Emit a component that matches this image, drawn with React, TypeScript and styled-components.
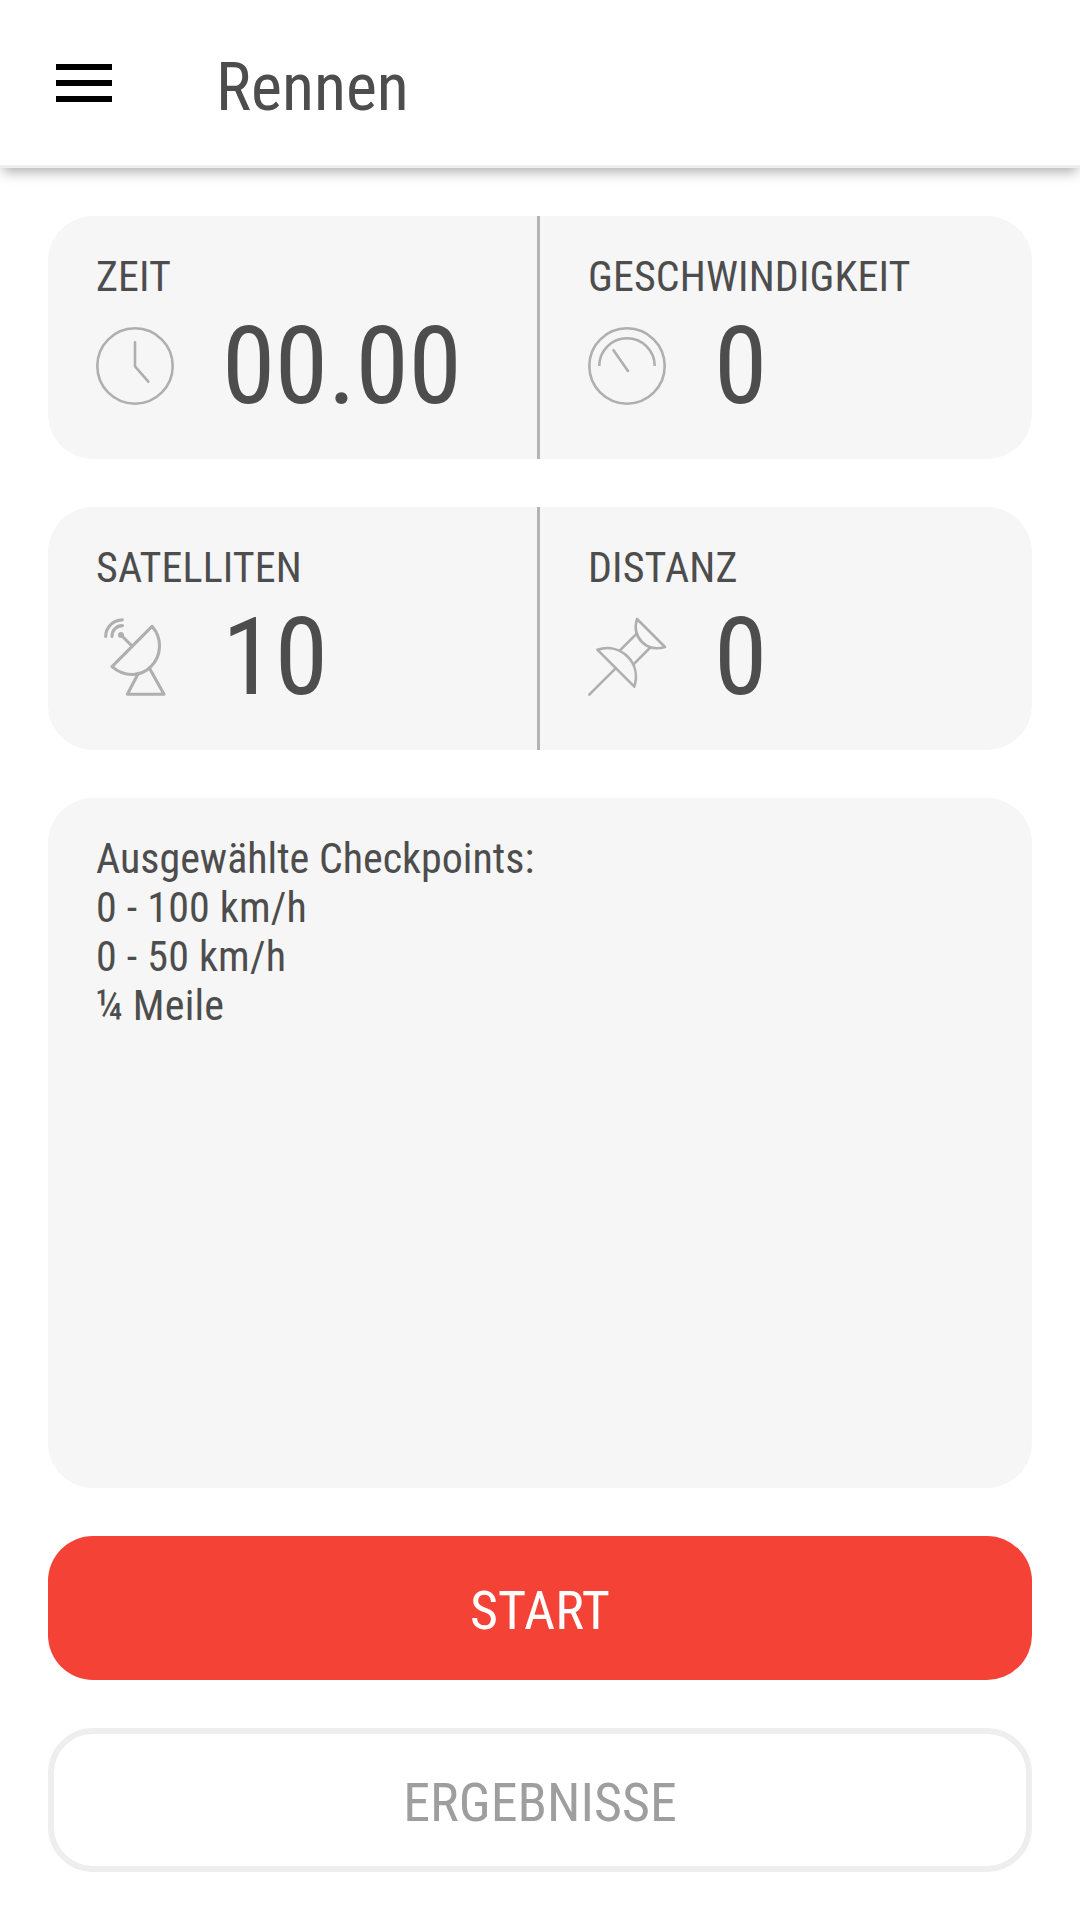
import React from "react";
import styled, { createGlobalStyle } from "styled-components";

const GlobalStyle = createGlobalStyle`
  * { box-sizing: border-box; }
  body {
    margin: 0;
    background: #fff;
    color: #4d4d4d;
    font-family: "Roboto Condensed", Roboto, sans-serif;
    font-stretch: 75%;
  }
`;

const Screen = styled.div`
  display: flex;
  flex-direction: column;
  width: 1080px;
  height: 1920px;
`;

const Header = styled.header`
  display: flex;
  align-items: flex-start;
  height: 168px;
  padding: 0 56px;
  background: #fff;
  border-bottom: 3px solid #eee;
  box-shadow: 0 7px 12px -3px rgba(0, 0, 0, 0.32);
`;

const MenuButton = styled.button`
  display: flex;
  flex-direction: column;
  gap: 10px;
  width: 56px;
  margin: 64px 104px 0 0;
  padding: 0;
  border: 0;
  background: none;
`;

const MenuBar = styled.span`
  height: 6px;
  background: #000;
`;

const Title = styled.h1`
  margin: 49px 0 0;
  font-size: 66px;
  font-weight: 400;
  line-height: 77px;
`;

const Content = styled.main`
  flex: 1;
  display: flex;
  flex-direction: column;
  gap: 48px;
  padding: 48px;
`;

const Card = styled.section`
  display: flex;
  flex-shrink: 0;
  height: 243px;
  overflow: hidden;
  border-radius: 45px;
  background: #f6f6f6;
`;

const Metric = styled.div<{ $divided?: boolean }>`
  width: 492px;
  padding: 36px 0 0 48px;
  border-right: ${(p) => (p.$divided ? "3px solid #b3b3b3" : "0")};
`;

const Label = styled.div`
  font-size: 42px;
  line-height: 49px;
  letter-spacing: 0.12px;
`;

const Reading = styled.div`
  display: flex;
  align-items: center;
  gap: 48px;
  height: 126px;
  margin-top: 2px;
`;

const Value = styled.span`
  font-size: 108px;
  line-height: 126px;
  letter-spacing: -0.5px;
`;

const Icon = styled.svg<{ $weight?: number }>`
  width: 78px;
  height: 78px;
  overflow: visible;
  fill: none;
  stroke: #afafaf;
  stroke-width: ${(p) => p.$weight ?? 2.6};
  stroke-linecap: round;
  stroke-linejoin: round;
`;

const Checkpoints = styled.section`
  flex: 1;
  padding: 36px 48px;
  border-radius: 45px;
  background: #f6f6f6;
  font-size: 42px;
  line-height: 49px;
`;

const Checkpoint = styled.div`
  letter-spacing: 0.2px;
`;

const Action = styled.button<{ $primary?: boolean }>`
  flex-shrink: 0;
  height: 144px;
  padding: 4px 0 0;
  border: ${(p) => (p.$primary ? "0" : "6px solid #eee")};
  border-radius: 45px;
  background: ${(p) => (p.$primary ? "#f44336" : "#fff")};
  color: ${(p) => (p.$primary ? "#fff" : "#9e9e9e")};
  font: inherit;
  font-stretch: 75%;
  font-size: 54px;
`;

const ClockIcon = () => (
  <Icon viewBox="0 0 78 78">
    <circle cx="39" cy="39" r="37.7" />
    <path d="M39 15.3V39.3L52.3 54.7" />
  </Icon>
);

const GaugeIcon = () => (
  <Icon viewBox="0 0 78 78">
    <circle cx="39" cy="39" r="37.7" />
    <path strokeLinecap="butt" d="M11.3 39a27.7 27.7 0 0 1 55.4 0" />
    <path d="M25.5 23.2L40 44" />
  </Icon>
);

const DishIcon = () => (
  <Icon viewBox="0 0 78 78" $weight={3.1}>
    <path d="M56 8.3L16 48.7C29 60 45.5 58 54.6 48.8C66 38 66.5 20 56 8.3Z" />
    <path d="M25 17L36 28" />
    <circle cx="25" cy="17" r="3" fill="#afafaf" stroke="none" />
    <path d="M26.5 7.6C20.5 7.6 16 12 16 18.4M26.3 1.9C17 2.2 9.7 9.2 9.7 18.4" />
    <path d="M42.3 55.3L31.4 76.2H68L53.3 50" />
  </Icon>
);

const PinIcon = () => (
  <Icon viewBox="0 0 78 78">
    <path d="M1.3 76.7L27.6 50.4" />
    <path d="M9.3 31.7C21 28 32 31 39.5 38.5C47 46 50 57 46.3 68.7Z" />
    <path d="M32 32.3L48.7 15.7M45.5 46.3L62.3 29.5" />
    <path d="M49 1C46.5 9.5 48 18 54 24C60 30 68.5 31.5 77 29Z" />
  </Icon>
);

const rows = [
  [
    { label: "ZEIT", value: "00.00", Glyph: ClockIcon },
    { label: "GESCHWINDIGKEIT", value: "0", Glyph: GaugeIcon },
  ],
  [
    { label: "SATELLITEN", value: "10", Glyph: DishIcon },
    { label: "DISTANZ", value: "0", Glyph: PinIcon },
  ],
];

const checkpoints = ["0 - 100 km/h", "0 - 50 km/h", "¼ Meile"];

export default function App() {
  return (
    <Screen>
      <GlobalStyle />
      <Header>
        <MenuButton aria-label="Menü">
          <MenuBar />
          <MenuBar />
          <MenuBar />
        </MenuButton>
        <Title>Rennen</Title>
      </Header>
      <Content>
        {rows.map((row) => (
          <Card key={row[0].label}>
            {row.map(({ label, value, Glyph }, i) => (
              <Metric key={label} $divided={i === 0}>
                <Label>{label}</Label>
                <Reading>
                  <Glyph />
                  <Value>{value}</Value>
                </Reading>
              </Metric>
            ))}
          </Card>
        ))}
        <Checkpoints>
          <div>Ausgewählte Checkpoints:</div>
          {checkpoints.map((c) => (
            <Checkpoint key={c}>{c}</Checkpoint>
          ))}
        </Checkpoints>
        <Action $primary>START</Action>
        <Action>ERGEBNISSE</Action>
      </Content>
    </Screen>
  );
}
